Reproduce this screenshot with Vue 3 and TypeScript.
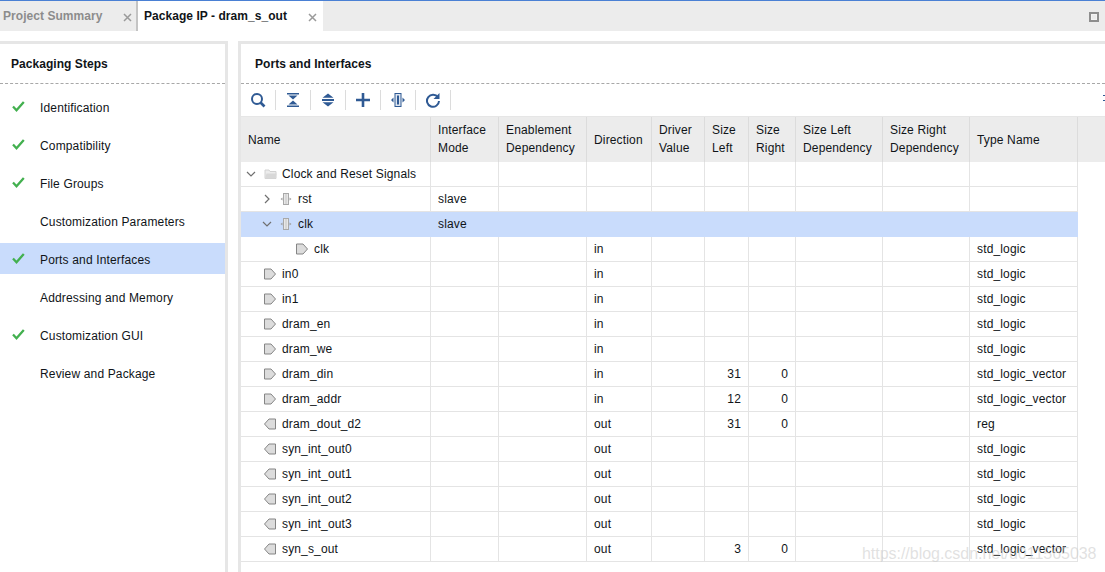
<script setup lang="ts">
interface Row {
  name: string; depth: number; kind: 'folder' | 'iface' | 'in' | 'out'; caret?: 'down' | 'right';
  mode?: string; dir?: string; left?: string; right?: string; type?: string; selected?: boolean;
}
const steps = [
  { label: 'Identification', done: true },
  { label: 'Compatibility', done: true },
  { label: 'File Groups', done: true },
  { label: 'Customization Parameters', done: false },
  { label: 'Ports and Interfaces', done: true, active: true },
  { label: 'Addressing and Memory', done: false },
  { label: 'Customization GUI', done: true },
  { label: 'Review and Package', done: false },
]
const headers = [
  ['Name'], ['Interface', 'Mode'], ['Enablement', 'Dependency'], ['Direction'], ['Driver', 'Value'],
  ['Size', 'Left'], ['Size', 'Right'], ['Size Left', 'Dependency'], ['Size Right', 'Dependency'], ['Type Name'],
]
const widths = [190, 68, 88, 65, 53, 44, 47, 87, 87, 108]
const L = 'std_logic', V = 'std_logic_vector'
const rows: Row[] = [
  { name: 'Clock and Reset Signals', depth: 0, kind: 'folder', caret: 'down' },
  { name: 'rst', depth: 1, kind: 'iface', caret: 'right', mode: 'slave' },
  { name: 'clk', depth: 1, kind: 'iface', caret: 'down', mode: 'slave', selected: true },
  { name: 'clk', depth: 2, kind: 'in', dir: 'in', type: L },
  { name: 'in0', depth: 0, kind: 'in', dir: 'in', type: L },
  { name: 'in1', depth: 0, kind: 'in', dir: 'in', type: L },
  { name: 'dram_en', depth: 0, kind: 'in', dir: 'in', type: L },
  { name: 'dram_we', depth: 0, kind: 'in', dir: 'in', type: L },
  { name: 'dram_din', depth: 0, kind: 'in', dir: 'in', left: '31', right: '0', type: V },
  { name: 'dram_addr', depth: 0, kind: 'in', dir: 'in', left: '12', right: '0', type: V },
  { name: 'dram_dout_d2', depth: 0, kind: 'out', dir: 'out', left: '31', right: '0', type: 'reg' },
  { name: 'syn_int_out0', depth: 0, kind: 'out', dir: 'out', type: L },
  { name: 'syn_int_out1', depth: 0, kind: 'out', dir: 'out', type: L },
  { name: 'syn_int_out2', depth: 0, kind: 'out', dir: 'out', type: L },
  { name: 'syn_int_out3', depth: 0, kind: 'out', dir: 'out', type: L },
  { name: 'syn_s_out', depth: 0, kind: 'out', dir: 'out', left: '3', right: '0', type: V },
]
</script>

<template>
  <div class="app">
    <div class="tabs">
      <div class="tab idle"><span>Project Summary</span>
        <svg class="x" width="9" height="9" viewBox="0 0 9 9"><path d="M1 1l7 7M8 1l-7 7" /></svg>
      </div>
      <div class="tab on"><span>Package IP - dram_s_out</span>
        <svg class="x" width="9" height="9" viewBox="0 0 9 9"><path d="M1 1l7 7M8 1l-7 7" /></svg>
      </div>
      <div class="maxi"></div>
    </div>
    <div class="body">
      <aside class="steps">
        <h2 class="title">Packaging Steps</h2>
        <ul class="list">
          <li v-for="s in steps" :key="s.label" class="step" :class="{ active: s.active }">
            <svg v-if="s.done" class="check" width="13" height="11" viewBox="0 0 13 11">
              <path d="M1 5.500l3.500 3.700L11.800 1" fill="none" stroke="#43b04f" stroke-width="2.300" />
            </svg>
            <span>{{ s.label }}</span>
          </li>
        </ul>
      </aside>
      <section class="main">
        <h2 class="title">Ports and Interfaces</h2>
        <div class="toolbar">
          <button class="tool"><svg width="16" height="16" viewBox="0 0 16 16" fill="none" stroke="#2f5a94"><circle cx="7" cy="7" r="5" stroke-width="2" /><path d="M10.500 10.500l4 4" stroke-width="2.600" /></svg></button>
          <button class="tool"><svg width="16" height="16" viewBox="0 0 16 16" fill="#2f5a94"><path d="M2 1h12v1.600H2zM2 13.400h12V15H2zM3.500 3.600h9L8 7.400zM8 8.600l4.500 3.800h-9z" /></svg></button>
          <button class="tool"><svg width="16" height="16" viewBox="0 0 16 16" fill="#2f5a94"><path d="M8 1.500l5.500 4.300h-11zM8 14.500l-5.500-4.300h11zM2 7h12v2H2z" /></svg></button>
          <button class="tool"><svg width="16" height="16" viewBox="0 0 16 16" fill="#2f5a94"><path d="M6.700 1h2.600v5.700H15v2.600H9.300V15H6.700V9.300H1V6.700h5.700z" /></svg></button>
          <button class="tool"><svg width="16" height="16" viewBox="0 0 16 16"><rect x="5" y="1.500" width="6" height="13" fill="#dfe6f0" stroke="#2f5a94" /><rect x="7" y="3.500" width="2" height="9" fill="#2f5a94" /><path d="M3.500 5.500v5L1 8zM12.500 5.500v5L15 8z" fill="#2f5a94" /></svg></button>
          <button class="tool"><svg width="16" height="16" viewBox="0 0 16 16" fill="none"><path d="M13 5.500A6 6 0 1 0 14 9" stroke="#2f5a94" stroke-width="2" /><path d="M14.500 1v6h-6z" fill="#2f5a94" /></svg></button>
          <span class="grip"></span>
        </div>
        <div class="grid" :style="{ gridTemplateColumns: widths.map(w => w + 'px').join(' ') + ' 1fr' }">
          <div v-for="h in headers" :key="h.join()" class="hcell" :class="{ two: h.length === 2 }"><span v-for="l in h" :key="l">{{ l }}</span></div>
          <div class="hfill"></div>
          <template v-for="(r, i) in rows" :key="i">
            <div class="cell name" :class="{ sel: r.selected }">
              <span class="tree" :class="'d' + r.depth">
                <svg v-if="r.caret" class="caret" width="10" height="10" viewBox="0 0 10 10" fill="none" stroke="#707070" stroke-width="1.200">
                  <path v-if="r.caret === 'down'" d="M1 3l4 4 4-4" />
                  <path v-else d="M3 1l4 4-4 4" />
                </svg>
              </span>
              <svg v-if="r.kind === 'folder'" class="ico" width="14" height="12" viewBox="0 0 14 12">
                <path d="M1 2h4l1 1.500h6V10.500H1z" fill="#ececec" stroke="#d2d2d2" />
                <path d="M2.500 5.500h10L11.500 10.500H1z" fill="#d8d8d8" />
              </svg>
              <svg v-else-if="r.kind === 'iface'" class="ico" width="14" height="14" viewBox="0 0 14 14">
                <rect x="3.500" y="1.500" width="5" height="11" fill="#e8e8e8" stroke="#a8a8a8" />
                <path d="M6 2v10" stroke="#c4c4c4" />
                <path d="M2.500 5.500v3L0.500 7zM9.500 5.500v3L11.500 7z" fill="#a0a0a0" />
              </svg>
              <svg v-else-if="r.kind === 'in'" class="ico" width="14" height="12" viewBox="0 0 14 12">
                <path d="M0.500 1h6.500l4.500 5-4.500 5H0.500z" fill="#dcdcdc" stroke="#858585" />
              </svg>
              <svg v-else class="ico" width="14" height="12" viewBox="0 0 14 12">
                <path d="M11.500 1H5L0.500 6 5 11h6.500z" fill="#dcdcdc" stroke="#858585" />
              </svg>
              <span class="lbl">{{ r.name }}</span>
            </div>
            <div class="cell" :class="{ sel: r.selected }">{{ r.mode }}</div>
            <div class="cell" :class="{ sel: r.selected }"></div>
            <div class="cell" :class="{ sel: r.selected }">{{ r.dir }}</div>
            <div class="cell" :class="{ sel: r.selected }"></div>
            <div class="cell num" :class="{ sel: r.selected }">{{ r.left }}</div>
            <div class="cell num" :class="{ sel: r.selected }">{{ r.right }}</div>
            <div class="cell" :class="{ sel: r.selected }"></div>
            <div class="cell" :class="{ sel: r.selected }"></div>
            <div class="cell" :class="{ sel: r.selected }">{{ r.type }}</div>
            <div class="fill"></div>
          </template>
        </div>
      </section>
    </div>
    <div class="mark">https://blog.csdn.net/u011565038</div>
  </div>
</template>

<style>
html, body { margin: 0; overflow: hidden; background: #fff; }
</style>

<style scoped>
.app {
  position: relative; width: 1105px; height: 572px; overflow: hidden; background: #fff;
  font-family: "Liberation Sans", Arial, sans-serif; font-size: 12px; color: #101418; letter-spacing: 0.15px;
  display: flex; flex-direction: column;
}
.tabs {
  height: 30px; flex: none; display: flex; background: #ececec; border-top: 1px solid #4a80d4;
}
.tab { display: flex; align-items: flex-start; font-weight: bold; box-sizing: border-box; height: 30px; padding-top: 8px; letter-spacing: 0.05px; }
.tab.idle { width: 138px; padding-left: 3px; color: #8c8c8c; border-right: 2px solid #c4c4c4; }
.tab.on { width: 185px; padding-left: 6px; background: #fff; color: #101418; }
.tab .x { margin-left: auto; margin-top: 4px; fill: none; stroke: #9a9a9a; stroke-width: 1.500; }
.tab.idle .x { margin-right: 4px; }
.tab.on .x { margin-right: 6px; }
.maxi {
  margin: 11px 6px 0 auto; width: 10px; height: 10px; box-sizing: border-box;
  border: 2px solid #8e8e8e; background: #ececec; box-shadow: inset 0 0 0 1px #f4f4f4;
}
.body { flex: 1; display: flex; padding-top: 10px; gap: 10px; min-height: 0; }
.steps {
  width: 228px; flex: none; box-sizing: border-box; border-top: 3px solid #e6e6e6; border-right: 3px solid #e6e6e6;
}
.main { flex: 1; min-width: 0; border-top: 3px solid #e6e6e6; border-left: 3px solid #e6e6e6; }
.title {
  margin: 0; height: 40px; box-sizing: border-box; padding: 13px 0 0 11px; font-size: 12px; font-weight: bold;
  border-bottom: 1px dashed #a8a8a8; line-height: 14px; letter-spacing: 0.05px;
}
.main .title { padding-left: 14px; }
.list { list-style: none; margin: 0; padding: 5px 0 0; }
.step { position: relative; height: 38px; display: flex; align-items: center; padding-left: 40px; box-sizing: border-box; }
.step.active { background: #c9dcfc; height: 31px; padding-top: 2px; margin: 2px 0 5px; }
.check { position: absolute; left: 12px; top: 12px; }
.step.active .check { top: 10px; }
.toolbar { height: 32px; display: flex; align-items: center; }
.tool {
  all: unset; width: 35px; height: 20px; display: flex; align-items: center; justify-content: center;
  border-right: 1px solid #dcdcdc; box-sizing: border-box;
}
.grip { margin: 0 0 5px auto; width: 2px; height: 6px; border-top: 1px solid #2f5a94; border-bottom: 1px solid #2f5a94; box-sizing: border-box; }
.grid { display: grid; grid-auto-rows: 25px; grid-template-rows: 45px; border-top: 1px solid #e6e6e6; }
.hcell {
  background: #ececec; border-right: 1px solid #dcdcdc; box-sizing: border-box; display: flex; flex-direction: column;
  justify-content: center; padding-left: 7px; line-height: 18px;
}
.hcell.two { padding-bottom: 2px; }
.hfill { background: #ececec; }
.cell {
  border-right: 1px solid #e4e4e4; border-bottom: 1px solid #e4e4e4; box-sizing: border-box;
  padding-left: 7px; line-height: 24px; white-space: nowrap;
}
.cell.sel { background: #c9dcfc; border-right-color: #c9dcfc; border-bottom-color: #c9dcfc; }
.cell.num { text-align: right; padding: 0 7px 0 0; }
.fill { background: #fff; }
.name { display: flex; align-items: center; padding-left: 0; }
.tree { display: flex; align-items: center; flex: none; padding-left: 5px; box-sizing: border-box; }
.tree.d0 { width: 23px; }
.tree.d1 { width: 39px; padding-left: 21px; }
.tree.d2 { width: 55px; }
.ico { flex: none; }
.lbl { margin-left: 4px; }
.mark {
  position: absolute; left: 862px; top: 545px; font-size: 16px; line-height: 18px; letter-spacing: -0.03px;
  color: rgba(205, 205, 205, 0.6); pointer-events: none; white-space: nowrap;
}
</style>
